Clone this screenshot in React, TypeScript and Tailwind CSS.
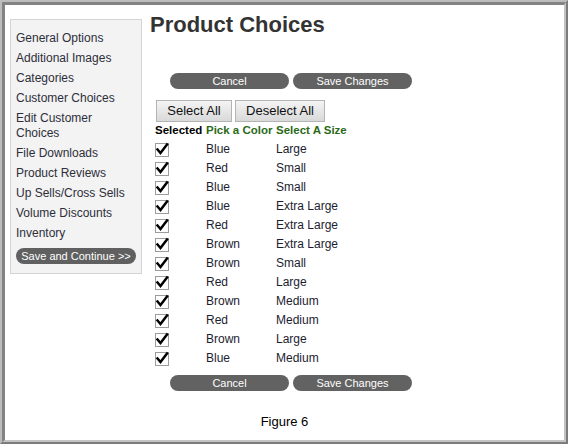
import React from 'react';

const menuItems = [
  'General Options',
  'Additional Images',
  'Categories',
  'Customer Choices',
  'Edit Customer Choices',
  'File Downloads',
  'Product Reviews',
  'Up Sells/Cross Sells',
  'Volume Discounts',
  'Inventory',
];

const choices = [
  { color: 'Blue', size: 'Large' },
  { color: 'Red', size: 'Small' },
  { color: 'Blue', size: 'Small' },
  { color: 'Blue', size: 'Extra Large' },
  { color: 'Red', size: 'Extra Large' },
  { color: 'Brown', size: 'Extra Large' },
  { color: 'Brown', size: 'Small' },
  { color: 'Red', size: 'Large' },
  { color: 'Brown', size: 'Medium' },
  { color: 'Red', size: 'Medium' },
  { color: 'Brown', size: 'Large' },
  { color: 'Blue', size: 'Medium' },
];

const CheckBox = () => (
  <svg width="14" height="14" viewBox="0 0 14 14" className="block overflow-visible">
    <rect x="0.5" y="0.5" width="13" height="13" fill="#fff" stroke="#9c9c9c" />
    <path d="M2.5 6.5 L5.5 10 L12 1.5" fill="none" stroke="#000" strokeWidth="2.5" strokeLinecap="square" />
  </svg>
);

const PillButtons = () => (
  <div className="flex gap-[4px] ml-[20px]">
    <button className="w-[119px] h-[16px] rounded-full bg-[#626262] text-white text-[11px] leading-[16px] text-center">
      Cancel
    </button>
    <button className="w-[119px] h-[16px] rounded-full bg-[#626262] text-white text-[11px] leading-[16px] text-center">
      Save Changes
    </button>
  </div>
);

export default function App() {
  return (
    <div
      className="w-[568px] h-[444px] bg-white border-t-2 border-l-2 border-b-2 border-r-2 border-t-[#bdbdbd] border-l-[#bdbdbd] border-b-[#7c7c7c] border-r-[#7c7c7c]"
      style={{ fontFamily: '"Liberation Sans", Arial, sans-serif' }}
    >
      <div className="h-full border-t-[3px] border-l-[3px] border-b-2 border-r-2 border-t-[#838383] border-l-[#838383] border-b-[#c4c4c4] border-r-[#c4c4c4]">
        <div className="flex items-start">
          {/* Sidebar */}
          <div className="ml-[5px] mt-[14px] w-[132px] bg-[#f3f3f3] border border-[#d4d4d4] px-[5px] pt-[8px] pb-[6px]">
            {menuItems.map((item) => (
              <div key={item} className="text-[12px] leading-[15px] py-[2.5px] text-[#2e2e3a]">
                {item}
              </div>
            ))}
            <button className="mt-[4px] w-[120px] h-[16px] rounded-full bg-[#606060] text-white text-[11px] leading-[16px] text-center">
              {'Save and Continue >>'}
            </button>
          </div>

          {/* Main */}
          <div className="ml-[8px] flex-1">
            <h1 className="mt-[7px] text-[22px] leading-[26px] font-bold text-[#333]">Product Choices</h1>

            <div className="mt-[35px]">
              <PillButtons />
            </div>

            <div className="mt-[11px] ml-[6px] flex gap-[3px]">
              <button className="w-[76px] h-[22px] text-[13px] text-[#111] border border-[#b4b4b4] bg-gradient-to-b from-[#f4f4f4] to-[#d9d9d9]">
                Select All
              </button>
              <button className="w-[90px] h-[22px] text-[13px] text-[#111] border border-[#b4b4b4] bg-gradient-to-b from-[#f4f4f4] to-[#d9d9d9]">
                Deselect All
              </button>
            </div>

            <div className="ml-[5px] grid grid-cols-[51px_70px_auto] text-[12px]">
              <div className="font-bold text-black text-[11.5px] leading-[17px] pb-[1px]">Selected</div>
              <div className="font-bold text-[#2b6a18] text-[11.5px] leading-[17px] pb-[1px]">Pick a Color</div>
              <div className="font-bold text-[#2b6a18] text-[11.5px] leading-[17px] pb-[1px]">Select A Size</div>
              {choices.map((c, i) => (
                <React.Fragment key={i}>
                  <div className="h-[19px] flex items-center">
                    <CheckBox />
                  </div>
                  <div className="h-[19px] leading-[19px] text-[#1d1d30]">{c.color}</div>
                  <div className="h-[19px] leading-[19px] text-[#1d1d30]">{c.size}</div>
                </React.Fragment>
              ))}
            </div>

            <div className="mt-[7px]">
              <PillButtons />
            </div>
          </div>
        </div>

        <div className="mt-[23px] text-center text-[13px] leading-[16px] text-black">Figure 6</div>
      </div>
    </div>
  );
}
